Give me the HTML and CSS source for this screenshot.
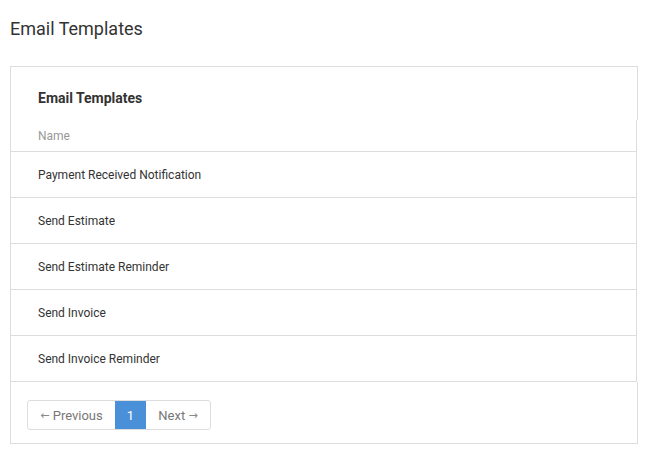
FILE: index.html
```html
<!DOCTYPE html>
<html>
<head>
<meta charset="utf-8">
<link rel="stylesheet" href="styles.css">
</head>
<body>
<h1 class="page-title">Email Templates</h1>
<div class="card">
  <div class="card-head">Email Templates</div>
  <div class="table">
    <div class="th">Name</div>
    <div class="tr">Payment Received Notification</div>
    <div class="tr">Send Estimate</div>
    <div class="tr">Send Estimate Reminder</div>
    <div class="tr">Send Invoice</div>
    <div class="tr">Send Invoice Reminder</div>
  </div>
  <div class="card-foot">
    <div class="pager">
      <span class="pg prev"><span class="arrow">←</span>&nbsp;Previous</span>
      <span class="pg active">1</span>
      <span class="pg next">Next&nbsp;<span class="arrow">→</span></span>
    </div>
  </div>
</div>
</body>
</html>
```
FILE: styles.css
```css
* { box-sizing: border-box; }
body {
  margin: 0;
  font-family: Roboto, "Liberation Sans", sans-serif;
  color: #333;
  background: #fff;
}
.page-title {
  margin: 0;
  padding: 18px 0 0 10px;
  height: 66px;
  font-size: 18px;
  font-weight: 400;
  line-height: 22px;
  color: #333;
}
.card {
  margin-left: 10px;
  width: 628px;
}
.card-head {
  height: 54px;
  border: 1px solid #ddd;
  border-bottom: none;
  padding: 23px 0 0 27px;
  font-size: 14px;
  font-weight: 700;
  line-height: 17px;
  color: #333;
}
.table {
  border-left: 1px solid #ddd;
  border-right: 1px solid #ddd;
  margin-right: 1px;
}
.th {
  height: 32px;
  border-bottom: 1px solid #ddd;
  padding: 9px 0 0 27px;
  font-size: 12px;
  line-height: 15px;
  color: #999;
}
.tr {
  height: 46px;
  border-bottom: 1px solid #ddd;
  padding: 16px 0 0 27px;
  font-size: 12px;
  line-height: 15px;
  color: #333;
}
.card-foot {
  height: 62px;
  border: 1px solid #ddd;
  border-top: none;
  padding: 18px 0 0 16px;
}
.pager {
  display: inline-flex;
  height: 30px;
  border: 1px solid #ddd;
  border-radius: 3px;
  overflow: hidden;
}
.pg {
  display: flex;
  align-items: center;
  justify-content: center;
  font-size: 13px;
  color: #777;
}
.arrow {
  font-family: "DejaVu Sans", sans-serif;
  font-size: 11px;
  color: #888;
}
.prev { width: 87px; }
.active { width: 31px; background: #4a90d9; color: #fff; }
.next { width: 64px; }
```
